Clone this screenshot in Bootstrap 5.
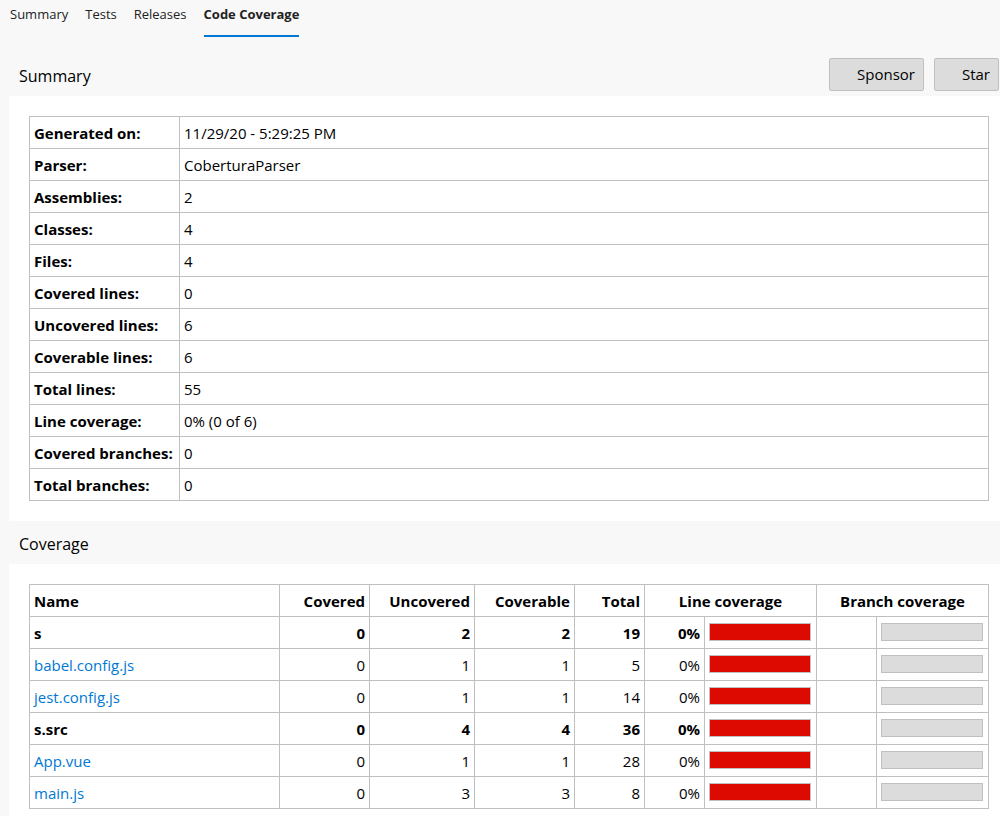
<!DOCTYPE html>
<html lang="en">
<head>
<meta charset="utf-8">
<meta name="viewport" content="width=device-width, initial-scale=1">
<title>Code Coverage</title>
<link href="https://cdn.jsdelivr.net/npm/bootstrap@5.3.0/dist/css/bootstrap.min.css" rel="stylesheet">
<style>
  body { font-family: "Open Sans", "Noto Sans", sans-serif; font-size: 15px; line-height: 21px; color: #000; background: #f8f8f8; }
  .tabs { gap: 17px; padding: 4px 10px 0; font-size: 13px; }
  .tabs .nav-link { padding: 0 0 10px; color: #222; border-bottom: 2px solid transparent; }
  .tabs .nav-link.active { font-weight: 700; border-color: #0078d4; }
  .report { margin-left: 9px; }
  .report h1 { margin: 0; font-size: 16px; font-weight: 400; line-height: 21px; }
  .title-bar { padding: 21px 1px 5px 10px; }
  .title-bar h1 { padding-top: 3px; }
  .tools { gap: 10px; }
  .section-bar { padding: 13px 10px 9px; }
  .btn-tool { padding: 5px 8px 5px 27px; font-size: 15px; line-height: 21px; color: #000; background: #dcdcdc; border: 1px solid #c0c0c0; border-radius: 2px; }
  .panel { padding: 20px 11px 20px 20px; background: #fff; }
  .panel-last { padding-bottom: 0; }
  .grid-table { margin: 0; table-layout: fixed; color: #000; border-color: #c0c0c0; border-collapse: collapse; }
  .grid-table th, .grid-table td { height: 32px; padding: 2px 4px 0; line-height: 21px; border: 1px solid #c0c0c0; vertical-align: middle; white-space: nowrap; color: #000; }
  .grid-table .bar-cell { padding: 0 4px 2px; }
  .grid-table a { color: #0078d4; text-decoration: none; }
  .w-label { width: 150px; }
  .w-covered { width: 90px; }
  .w-uncovered { width: 105px; }
  .w-coverable { width: 100px; }
  .w-total { width: 70px; }
  .w-percent { width: 60px; }
  .w-bar { width: 112px; }
  .bar { width: 102px; height: 18px; background: #dcdcdc; border: 1px solid #c0c0c0; }
  .bar-red { background: #dc0a00; }
</style>
</head>
<body class="min-vh-100 d-flex flex-column">
<nav class="nav tabs" aria-label="Build results">
  <a class="nav-link" href="#summary">Summary</a>
  <a class="nav-link" href="#tests">Tests</a>
  <a class="nav-link" href="#releases">Releases</a>
  <a class="nav-link active" aria-current="page" href="#coverage">Code Coverage</a>
</nav>
<main class="report flex-grow-1 d-flex flex-column">
  <header class="title-bar d-flex justify-content-between align-items-center">
    <h1>Summary</h1>
    <div class="d-flex tools">
      <button type="button" class="btn btn-tool">Sponsor</button>
      <button type="button" class="btn btn-tool">Star</button>
    </div>
  </header>
  <section class="panel">
    <table class="table grid-table">
      <colgroup><col class="w-label"><col></colgroup>
      <tbody>
        <tr><th scope="row">Generated on:</th><td>11/29/20 - 5:29:25 PM</td></tr>
        <tr><th scope="row">Parser:</th><td>CoberturaParser</td></tr>
        <tr><th scope="row">Assemblies:</th><td>2</td></tr>
        <tr><th scope="row">Classes:</th><td>4</td></tr>
        <tr><th scope="row">Files:</th><td>4</td></tr>
        <tr><th scope="row">Covered lines:</th><td>0</td></tr>
        <tr><th scope="row">Uncovered lines:</th><td>6</td></tr>
        <tr><th scope="row">Coverable lines:</th><td>6</td></tr>
        <tr><th scope="row">Total lines:</th><td>55</td></tr>
        <tr><th scope="row">Line coverage:</th><td>0% (0 of 6)</td></tr>
        <tr><th scope="row">Covered branches:</th><td>0</td></tr>
        <tr><th scope="row">Total branches:</th><td>0</td></tr>
      </tbody>
    </table>
  </section>
  <header class="section-bar"><h1>Coverage</h1></header>
  <section class="panel panel-last flex-grow-1">
    <table class="table grid-table text-end">
      <colgroup>
        <col><col class="w-covered"><col class="w-uncovered"><col class="w-coverable"><col class="w-total">
        <col class="w-percent"><col class="w-bar"><col class="w-percent"><col class="w-bar">
      </colgroup>
      <thead>
        <tr><th class="text-start">Name</th><th>Covered</th><th>Uncovered</th><th>Coverable</th><th>Total</th><th colspan="2" class="text-center">Line coverage</th><th colspan="2" class="text-center">Branch coverage</th></tr>
      </thead>
      <tbody>
        <tr class="fw-bold"><th scope="row" class="text-start">s</th><td>0</td><td>2</td><td>2</td><td>19</td><td>0%</td><td class="bar-cell"><div class="bar bar-red"></div></td><td></td><td class="bar-cell"><div class="bar"></div></td></tr>
        <tr><td class="text-start"><a href="#babel">babel.config.js</a></td><td>0</td><td>1</td><td>1</td><td>5</td><td>0%</td><td class="bar-cell"><div class="bar bar-red"></div></td><td></td><td class="bar-cell"><div class="bar"></div></td></tr>
        <tr><td class="text-start"><a href="#jest">jest.config.js</a></td><td>0</td><td>1</td><td>1</td><td>14</td><td>0%</td><td class="bar-cell"><div class="bar bar-red"></div></td><td></td><td class="bar-cell"><div class="bar"></div></td></tr>
        <tr class="fw-bold"><th scope="row" class="text-start">s.src</th><td>0</td><td>4</td><td>4</td><td>36</td><td>0%</td><td class="bar-cell"><div class="bar bar-red"></div></td><td></td><td class="bar-cell"><div class="bar"></div></td></tr>
        <tr><td class="text-start"><a href="#app">App.vue</a></td><td>0</td><td>1</td><td>1</td><td>28</td><td>0%</td><td class="bar-cell"><div class="bar bar-red"></div></td><td></td><td class="bar-cell"><div class="bar"></div></td></tr>
        <tr><td class="text-start"><a href="#main">main.js</a></td><td>0</td><td>3</td><td>3</td><td>8</td><td>0%</td><td class="bar-cell"><div class="bar bar-red"></div></td><td></td><td class="bar-cell"><div class="bar"></div></td></tr>
      </tbody>
    </table>
  </section>
</main>
<script src="https://cdn.jsdelivr.net/npm/bootstrap@5.3.0/dist/js/bootstrap.bundle.min.js"></script>
</body>
</html>
